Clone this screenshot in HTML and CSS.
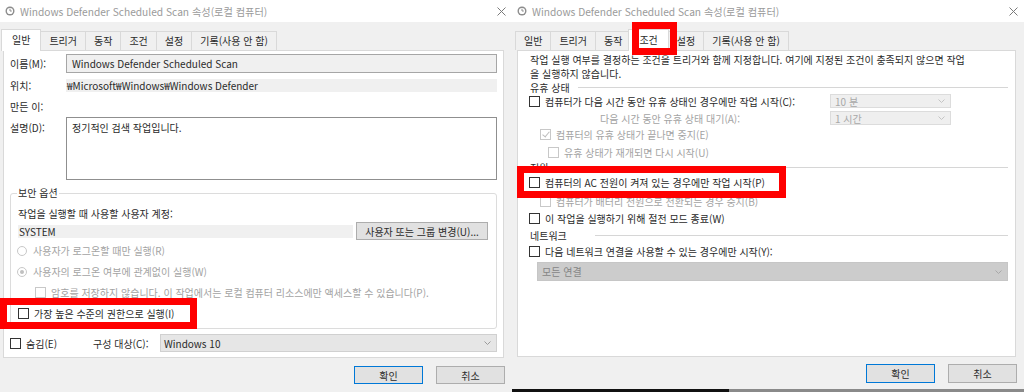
FILE: index.html
```html
<!DOCTYPE html>
<html lang="ko">
<head>
    <meta charset="UTF-8">
    <title>Windows Defender Scheduled Scan 속성</title>
    <link rel="stylesheet" href="styles.css">
</head>
<body>
    <!-- 일반 탭 -->
    <div class="dialog">
        <div class="titlebar">
            <svg class="app-icon" viewBox="0 0 10 10"><circle cx="5" cy="5" r="4.5" fill="#8c8c8c"/><circle cx="5" cy="5" r="3.1" fill="#fff"/><path d="M5 2.8V5h1.8" stroke="#8c8c8c" stroke-width="1" fill="none"/></svg>
            <span class="title">Windows Defender Scheduled Scan 속성(로컬 컴퓨터)</span>
            <svg class="close" viewBox="0 0 9 9"><path d="M0.5 0.5l8 8M8.5 0.5l-8 8" stroke="#7a7a7a" stroke-width="1"/></svg>
        </div>
        <div class="tabs">
            <div class="tab active">일반</div>
            <div class="tab">트리거</div>
            <div class="tab">동작</div>
            <div class="tab">조건</div>
            <div class="tab">설정</div>
            <div class="tab">기록(사용 안 함)</div>
        </div>
        <div class="panel general">
            <div class="field field-name">
                <span>이름(M):</span>
                <div class="textbox">Windows Defender Scheduled Scan</div>
            </div>
            <div class="field field-loc">
                <span>위치:</span>
                <div class="band">₩Microsoft₩Windows₩Windows Defender</div>
            </div>
            <div class="field field-author">
                <span>만든 이:</span>
            </div>
            <div class="field field-desc">
                <span class="desc-label">설명(D):</span>
                <div class="textarea">정기적인 검색 작업입니다.</div>
            </div>

            <!-- 보안 옵션 -->
            <div class="group">
                <span class="group-title">보안 옵션</span>
                <div class="group-text">작업을 실행할 때 사용할 사용자 계정:</div>
                <div class="account-row">
                    <div class="band account">SYSTEM</div>
                    <button class="btn account-btn">사용자 또는 그룹 변경(U)...</button>
                </div>
                <div class="opt disabled"><span class="radio"></span>사용자가 로그온할 때만 실행(R)</div>
                <div class="opt disabled"><span class="radio on"></span>사용자의 로그온 여부에 관계없이 실행(W)</div>
                <div class="opt disabled indent"><span class="check"></span>암호를 저장하지 않습니다. 이 작업에서는 로컬 컴퓨터 리소스에만 액세스할 수 있습니다(P).</div>
                <div class="opt"><span class="check"></span>가장 높은 수준의 권한으로 실행(I)</div>
            </div>

            <div class="config">
                <div class="hide-opt"><span class="check"></span>숨김(E)</div>
                <span class="config-label">구성 대상(C):</span>
                <div class="select">
                    <span>Windows 10</span>
                    <svg class="chev" viewBox="0 0 7 4"><path d="M0.5 0.5L3.5 3.5L6.5 0.5" fill="none" stroke="#9a9a9a"/></svg>
                </div>
            </div>
        </div>
        <div class="footer">
            <button class="btn default">확인</button>
            <button class="btn">취소</button>
        </div>
        <div class="mark mark-run"></div>
    </div>

    <!-- 조건 탭 -->
    <div class="dialog">
        <div class="titlebar">
            <svg class="app-icon" viewBox="0 0 10 10"><circle cx="5" cy="5" r="4.5" fill="#8c8c8c"/><circle cx="5" cy="5" r="3.1" fill="#fff"/><path d="M5 2.8V5h1.8" stroke="#8c8c8c" stroke-width="1" fill="none"/></svg>
            <span class="title">Windows Defender Scheduled Scan 속성(로컬 컴퓨터)</span>
            <svg class="close" viewBox="0 0 9 9"><path d="M0.5 0.5l8 8M8.5 0.5l-8 8" stroke="#7a7a7a" stroke-width="1"/></svg>
        </div>
        <div class="tabs">
            <div class="tab">일반</div>
            <div class="tab">트리거</div>
            <div class="tab">동작</div>
            <div class="tab active">조건</div>
            <div class="tab">설정</div>
            <div class="tab">기록(사용 안 함)</div>
        </div>
        <div class="panel conditions">
            <p class="intro">작업 실행 여부를 결정하는 조건을 트리거와 함께 지정합니다. 여기에 지정된 조건이 충족되지 않으면 작업<br>을 실행하지 않습니다.</p>

            <div class="section idle-title"><span>유휴 상태</span><i class="rule"></i></div>
            <div class="idle">
                <div class="opt"><span class="check"></span>컴퓨터가 다음 시간 동안 유휴 상태인 경우에만 작업 시작(C):</div>
                <div class="select light">
                    <span>10 분</span>
                    <svg class="chev" viewBox="0 0 7 4"><path d="M0.5 0.5L3.5 3.5L6.5 0.5" fill="none" stroke="#c4c4c4"/></svg>
                </div>
            </div>
            <div class="idle idle-wait">
                <span class="wait-label disabled">다음 시간 동안 유휴 상태 대기(A):</span>
                <div class="select light">
                    <span>1 시간</span>
                    <svg class="chev" viewBox="0 0 7 4"><path d="M0.5 0.5L3.5 3.5L6.5 0.5" fill="none" stroke="#c4c4c4"/></svg>
                </div>
            </div>
            <div class="opt disabled idle-stop"><span class="check on"></span>컴퓨터의 유휴 상태가 끝나면 중지(E)</div>
            <div class="opt disabled idle-restart"><span class="check"></span>유휴 상태가 재개되면 다시 시작(U)</div>

            <div class="section power-title"><span>전원</span><i class="rule"></i></div>
            <div class="opt ac"><span class="check"></span>컴퓨터의 AC 전원이 켜져 있는 경우에만 작업 시작(P)</div>
            <div class="opt disabled battery"><span class="check"></span>컴퓨터가 배터리 전원으로 전환되는 경우 중지(B)</div>
            <div class="opt wake"><span class="check"></span>이 작업을 실행하기 위해 절전 모드 종료(W)</div>

            <div class="section network-title"><span>네트워크</span><i class="rule"></i></div>
            <div class="opt net"><span class="check"></span>다음 네트워크 연결을 사용할 수 있는 경우에만 시작(Y):</div>
            <div class="select dim net-select">
                <span>모든 연결</span>
                <svg class="chev" viewBox="0 0 7 4"><path d="M0.5 0.5L3.5 3.5L6.5 0.5" fill="none" stroke="#a8a8a8"/></svg>
            </div>
        </div>
        <div class="footer footer-right">
            <button class="btn default">확인</button>
            <button class="btn">취소</button>
        </div>
        <div class="screen-edge"></div>
        <div class="mark mark-tab"></div>
        <div class="mark mark-ac"></div>
    </div>
</body>
</html>
```

FILE: styles.css
```css
* {
    margin: 0;
    padding: 0;
    box-sizing: border-box;
}
body {
    width: 1024px;
    height: 392px;
    overflow: hidden;
    display: flex;
    background-color: #f0f0f0;
    font-family: "Noto Sans CJK KR", sans-serif;
    font-size: 10px;
    line-height: 13px;
    color: #2a2a2a;
}
.dialog {
    width: 512px;
    height: 392px;
    display: flex;
    flex-direction: column;
    position: relative;
    background-color: #f0f0f0;
}
.titlebar {
    height: 22px;
    flex: none;
    display: flex;
    align-items: center;
    gap: 5px;
    padding: 0 6px 0 5px;
    background-color: #fff;
    color: #9a9a9a;
    font-size: 10.2px;
}
.title {
    flex: 1;
    white-space: nowrap;
}
.app-icon {
    width: 10px;
    height: 10px;
}
.close {
    width: 9px;
    height: 9px;
}

/* 탭 */
.tabs {
    display: flex;
    align-items: flex-end;
    height: 21px;
    margin-top: 7px;
    padding-left: 3px;
}
.tab {
    height: 19px;
    padding: 0 8px;
    margin-right: -1px;
    border: 1px solid #d9d9d9;
    border-bottom: none;
    background-color: #f0f0f0;
    line-height: 18px;
    white-space: nowrap;
}
.tab.active {
    position: relative;
    z-index: 1;
    height: 22px;
    margin: 0 -1px -1px -2px;
    padding: 0 10px;
    background-color: #fff;
    line-height: 20px;
}

.panel {
    flex: none;
    background-color: #fff;
    border: 1px solid #d9d9d9;
}
.general {
    width: 501px;
    height: 308px;
    margin-left: 3px;
    padding: 3px 6px 0;
}
.conditions {
    width: 499px;
    height: 307px;
    margin-left: 5px;
    padding: 2px 7px 0 11px;
}

/* 일반 탭 필드 */
.field {
    display: grid;
    grid-template-columns: 56px 1fr;
    align-items: center;
}
.field-name {
    height: 19px;
}
.field-loc {
    height: 13px;
    margin-top: 6px;
}
.field-author {
    height: 14px;
    margin-top: 7px;
}
.field-desc {
    align-items: start;
    margin-top: 4px;
}
.desc-label {
    margin-top: 4px;
}
.textbox {
    height: 19px;
    padding: 0 5px;
    border: 1px solid #a6a6a6;
    background-color: #f0f0f0;
    line-height: 17px;
    white-space: nowrap;
}
.band {
    height: 13px;
    padding-left: 1px;
    background-color: #f0f0f0;
    white-space: nowrap;
}
.textarea {
    height: 63px;
    padding: 3px 5px;
    border: 1px solid #8f8f8f;
}

.group {
    margin-top: 13px;
    padding: 0 8px 4px 7px;
    border: 1px solid #dcdcdc;
    border-radius: 3px;
}
.group-title {
    display: block;
    width: max-content;
    margin: -8px 0 0 -1px;
    padding: 0 1px;
    background-color: #fff;
}
.group-text {
    margin-top: 8px;
}
.account-row {
    display: flex;
    align-items: center;
    justify-content: space-between;
    height: 18px;
    margin-top: 2px;
}
.band.account {
    width: 335px;
}
.btn {
    width: 69px;
    height: 18px;
    border: 1px solid #adadad;
    background-color: #e1e1e1;
    font: inherit;
    color: #2a2a2a;
    white-space: nowrap;
}
.btn.default {
    border-color: #0078d7;
}
.account-btn {
    width: 132px;
}

.opt {
    display: flex;
    align-items: center;
    gap: 5px;
    height: 21px;
    white-space: nowrap;
}
.opt .radio {
    margin: 0 1px 0 -1px;
}
.opt.indent {
    padding-left: 17px;
}
.disabled {
    color: #a3a3a3;
}
.check {
    flex: none;
    width: 11px;
    height: 11px;
    border: 1px solid #333;
    background-color: #fff;
    display: flex;
    align-items: center;
    justify-content: center;
}
.disabled .check {
    border-color: #c8c8c8;
}
.check.on::after {
    content: "";
    width: 3px;
    height: 6px;
    margin-top: -2px;
    border-right: 1px solid #bdbdbd;
    border-bottom: 1px solid #bdbdbd;
    transform: rotate(40deg);
}
.radio {
    flex: none;
    width: 10px;
    height: 10px;
    border: 1px solid #c8c8c8;
    border-radius: 50%;
    display: flex;
    align-items: center;
    justify-content: center;
}
.radio.on::after {
    content: "";
    width: 4px;
    height: 4px;
    border-radius: 50%;
    background-color: #c0c0c0;
}

.config {
    display: flex;
    align-items: center;
    height: 18px;
    margin-top: 5px;
}
.hide-opt {
    display: flex;
    align-items: center;
    gap: 5px;
    width: 83px;
}
.config-label {
    width: 67px;
}
.select {
    flex: 1;
    height: 18px;
    display: flex;
    align-items: center;
    justify-content: space-between;
    padding: 0 5px 0 3px;
    border: 1px solid #d0d0d0;
    background-color: #e6e6e6;
    white-space: nowrap;
}
.chev {
    width: 7px;
    height: 4px;
}

.footer {
    display: flex;
    justify-content: flex-end;
    gap: 13px;
    padding: 8px 7px 0 0;
}
.footer-right {
    padding-top: 7px;
}
.footer-right .btn {
    height: 19px;
}

/* 조건 탭 */
.intro {
    margin-left: 1px;
    line-height: 13.5px;
    white-space: nowrap;
}
.section {
    display: flex;
    align-items: center;
    height: 14px;
    margin-left: 1px;
}
.section .rule {
    flex: 1;
    margin-left: 8px;
    border-top: 1px solid #d6d6d6;
}
.power-title {
    height: 12px;
}
.network-title {
    height: 18px;
}
.network-title .rule {
    margin-left: 28px;
}
.idle {
    display: grid;
    grid-template-columns: 301px 121px;
    align-items: center;
    height: 14px;
}
.idle .opt {
    height: 14px;
}
.idle-wait {
    margin-top: 3px;
}
.wait-label {
    padding-left: 71px;
    white-space: nowrap;
}
.select.light {
    height: 14px;
    padding-left: 4px;
    border-color: #dcdcdc;
    background-color: #efefef;
    color: #a8a8a8;
}
.idle-stop {
    height: 18px;
    padding-left: 11px;
}
.idle-restart {
    height: 18px;
    padding-left: 19px;
}
.ac {
    height: 18px;
}
.battery {
    height: 20px;
    padding-left: 11px;
}
.wake {
    height: 15px;
}
.net {
    height: 14px;
}
.net-select {
    flex: none;
    height: 19px;
    margin: 4px 0 0 8px;
    padding-left: 4px;
}
.select.dim {
    border-color: #c6c6c6;
    background-color: #cccccc;
    color: #858585;
}
.screen-edge {
    margin-top: auto;
    height: 3px;
    background: linear-gradient(to right, #111 217px, #8a8a8a 217px);
}

/* 빨간 강조 상자 */
.mark {
    position: absolute;
    border: 7px solid #f00;
    z-index: 2;
}
.mark-run {
    left: 0;
    top: 298px;
    width: 197px;
    height: 31px;
}
.mark-tab {
    left: 120px;
    top: 22px;
    width: 45px;
    height: 33px;
}
.mark-ac {
    left: 5px;
    top: 166px;
    width: 269px;
    height: 32px;
}
```
